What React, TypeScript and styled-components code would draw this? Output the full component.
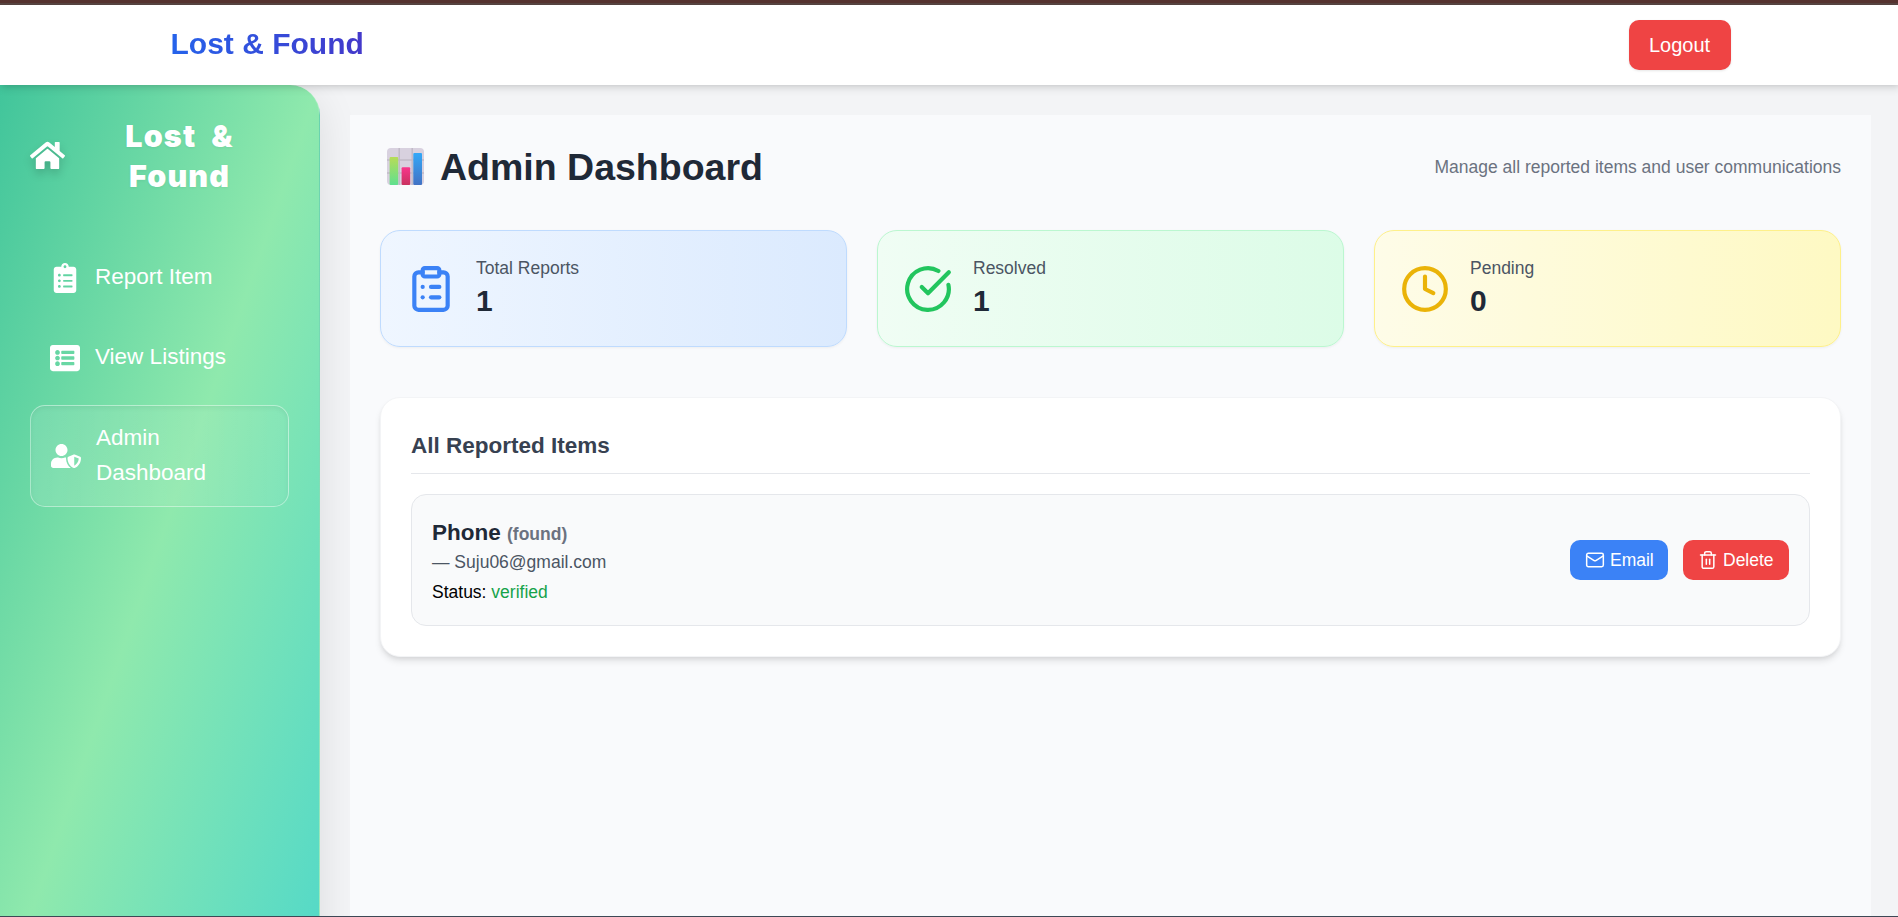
import React from "react";
import styled, { createGlobalStyle, css } from "styled-components";
import { FaHome, FaClipboardList, FaListAlt, FaUserShield } from "react-icons/fa";
import { ClipboardList, CircleCheckBig, Clock, Mail, Trash2 } from "lucide-react";

const GlobalStyle = createGlobalStyle`
  *, *::before, *::after { box-sizing: border-box; }
  body {
    margin: 0;
    background: #f3f4f6;
    font-family: "Liberation Sans", Arial, sans-serif;
    font-size: 20px;
    line-height: 30px;
  }
  h1, h2, h3, p { margin: 0; }
  button { font-family: inherit; border: 0; cursor: pointer; }
`;

const Viewport = styled.div`
  position: relative;
  height: 917px;
  overflow: hidden;
`;

const Page = styled.div`
  width: 1901px;
`;

const TopStrip = styled.div`
  height: 5px;
  background: linear-gradient(#55322f 0 3px, #564340 3px);
`;

const Header = styled.header`
  position: relative;
  z-index: 2;
  height: 80px;
  background: #fff;
  box-shadow: 0 5px 7.5px -1px rgba(0, 0, 0, 0.1), 0 2.5px 5px -2.5px rgba(0, 0, 0, 0.1);
`;

const HeaderInner = styled.div`
  display: flex;
  align-items: center;
  justify-content: space-between;
  width: 1600px;
  height: 100%;
  margin: 0 auto;
  padding: 0 20px;
`;

const Brand = styled.span`
  margin-bottom: 2px;
  font-size: 30px;
  font-weight: 700;
  line-height: 40px;
  background: linear-gradient(to right, #2563eb, #4338ca);
  background-clip: text;
  -webkit-background-clip: text;
  color: transparent;
`;

const LogoutButton = styled.button`
  width: 102px;
  height: 50px;
  border-radius: 10px;
  background: #ef4444;
  color: #fff;
  font-size: 20px;
  line-height: 30px;
  box-shadow: 0 1px 2.5px rgba(0, 0, 0, 0.1);
`;

const Body = styled.div`
  display: flex;
`;

const Sidebar = styled.aside`
  width: 320px;
  height: 917px;
  flex-shrink: 0;
  padding: 30px;
  border-right: 1px solid rgba(255, 255, 255, 0.2);
  border-top-right-radius: 30px;
  background: linear-gradient(to bottom right, #41c59b, #8fe9ad, #50d8c9);
  box-shadow: 0 10px 40px rgba(0, 0, 0, 0.1);
  color: #fff;
`;

const SidebarBrand = styled.div`
  display: flex;
  align-items: center;
  gap: 5px;
  height: 80px;
  margin-bottom: 50px;
  svg { filter: drop-shadow(0 5px 4px rgba(0, 0, 0, 0.16)); flex-shrink: 0; }
`;

const SidebarTitle = styled.h1`
  flex: 1;
  padding-top: 2px;
  text-align: center;
  font-family: Inter, "Liberation Sans", sans-serif;
  font-size: 30.5px;
  font-weight: 900;
  line-height: 40px;
  letter-spacing: 1.1px;
  word-spacing: 8px;
  text-shadow: 0 1px 3px rgba(0, 0, 0, 0.06);
`;

const Nav = styled.nav`
  display: flex;
  flex-direction: column;
  gap: 15px;
`;

const NavItem = styled.a<{ $active?: boolean }>`
  display: flex;
  align-items: center;
  gap: 15px;
  padding: 15px 20px;
  border-radius: 15px;
  font-size: 22.5px;
  line-height: 35px;
  svg { flex-shrink: 0; }
  ${({ $active }) =>
    $active &&
    css`
      border: 1px solid rgba(255, 255, 255, 0.4);
      background: linear-gradient(to right, rgba(255, 255, 255, 0.12), rgba(255, 255, 255, 0.05));
      box-shadow: inset 0 2px 5px rgba(0, 0, 0, 0.06);
    `}
`;

const NavLabel = styled.span`
  margin: -1px 0 1px;
`;

const Main = styled.main`
  flex: 1;
  padding: 30px;
`;

const Panel = styled.section`
  min-height: 900px;
  padding: 30px;
  background: #f9fafc;
`;

const TitleRow = styled.div`
  display: flex;
  align-items: center;
  justify-content: space-between;
  height: 45px;
  margin-bottom: 40px;
`;

const Title = styled.h1`
  display: flex;
  align-items: center;
  gap: 16px;
  padding-left: 7px;
  font-size: 37.5px;
  line-height: 45px;
  color: #1f2937;
  svg { margin-bottom: 2px; }
`;

const Subtitle = styled.p`
  font-size: 17.5px;
  line-height: 25px;
  color: #6b7280;
`;

const Stats = styled.div`
  display: grid;
  grid-template-columns: repeat(3, 1fr);
  gap: 30px;
  margin-bottom: 50px;
`;

const StatCard = styled.div<{ $from: string; $to: string; $line: string; $ink: string }>`
  display: flex;
  align-items: center;
  gap: 20px;
  height: 117px;
  padding: 25px;
  border: 1px solid ${(p) => p.$line};
  border-radius: 20px;
  background: linear-gradient(to right, ${(p) => p.$from}, ${(p) => p.$to});
  box-shadow: 0 1px 2.5px rgba(0, 0, 0, 0.05);
  > svg { color: ${(p) => p.$ink}; }
`;

const StatLabel = styled.p`
  font-size: 17.5px;
  line-height: 25px;
  color: #4b5563;
`;

const StatValue = styled.p`
  font-size: 30px;
  font-weight: 700;
  line-height: 40px;
  color: #1f2937;
`;

const ItemsCard = styled.section`
  padding: 30px;
  border: 1px solid #f3f4f6;
  border-radius: 20px;
  background: #fff;
  box-shadow: 0 5px 7.5px -1px rgba(0, 0, 0, 0.1), 0 2.5px 5px -2.5px rgba(0, 0, 0, 0.1);
`;

const ItemsHeading = styled.h2`
  height: 46px;
  margin-bottom: 20px;
  border-bottom: 1px solid #e5e7eb;
  font-size: 22.5px;
  line-height: 35px;
  color: #374151;
`;

const Item = styled.article`
  display: flex;
  align-items: center;
  justify-content: space-between;
  padding: 20px;
  border: 1px solid #e5e7eb;
  border-radius: 15px;
  background: #f9fafb;
`;

const ItemName = styled.h3`
  font-size: 22.5px;
  line-height: 35px;
  color: #1f2937;
  span { font-size: 17.5px; line-height: 1; color: #6b7280; }
`;

const ItemEmail = styled.p`
  font-size: 17.5px;
  line-height: 25px;
  color: #4b5563;
`;

const ItemStatus = styled.p`
  margin-top: 5px;
  font-size: 17.5px;
  line-height: 25px;
  color: #000;
  span { color: #16a34a; }
`;

const Actions = styled.div`
  display: flex;
  gap: 15px;
`;

const ActionButton = styled.button<{ $bg: string; $width: number }>`
  display: flex;
  align-items: center;
  gap: 5px;
  width: ${(p) => p.$width}px;
  height: 40px;
  padding: 0 15px;
  border-radius: 10px;
  background: ${(p) => p.$bg};
  color: #fff;
  font-size: 17.5px;
  line-height: 25px;
  svg { flex-shrink: 0; }
`;

const BottomEdge = styled.div`
  position: absolute;
  inset: auto 0 0 0;
  z-index: 3;
  height: 1px;
  background: #3d4855;
`;

const ChartIcon = () => (
  <svg width="37" height="37" viewBox="0 0 37 37">
    <defs>
      <linearGradient id="green" x1="0" y1="0" x2="0" y2="1">
        <stop offset="0" stopColor="#b7dc58" />
        <stop offset="1" stopColor="#5fe08f" />
      </linearGradient>
      <linearGradient id="pink" x1="0" y1="0" x2="0" y2="1">
        <stop offset="0" stopColor="#f8368c" />
        <stop offset="1" stopColor="#c9325f" />
      </linearGradient>
      <linearGradient id="blue" x1="0" y1="0" x2="0" y2="1">
        <stop offset="0" stopColor="#33a8f8" />
        <stop offset="1" stopColor="#4272c4" />
      </linearGradient>
    </defs>
    <rect width="37" height="37" rx="4" fill="#d8d1df" />
    <path d="M12.2 0v37M25.2 0v37M0 12h37M0 25h37" stroke="#c1bac7" strokeWidth="1.5" />
    <rect x="2.6" y="9" width="8.6" height="28" rx="1" fill="url(#green)" />
    <rect x="14.6" y="19.3" width="8.6" height="17.7" rx="1" fill="url(#pink)" />
    <rect x="26.3" y="5" width="8.7" height="32" rx="1" fill="url(#blue)" />
  </svg>
);

const stats = [
  { label: "Total Reports", value: 1, Icon: ClipboardList, from: "#eff6ff", to: "#dbeafe", line: "#bfdbfe", ink: "#3b82f6" },
  { label: "Resolved", value: 1, Icon: CircleCheckBig, from: "#f0fdf4", to: "#dcfce7", line: "#bbf7d0", ink: "#22c55e" },
  { label: "Pending", value: 0, Icon: Clock, from: "#fefce8", to: "#fef9c3", line: "#fef08a", ink: "#eab308" },
];

export default function App() {
  return (
    <Viewport>
      <GlobalStyle />
      <Page>
        <TopStrip />
        <Header>
          <HeaderInner>
            <Brand>Lost &amp; Found</Brand>
            <LogoutButton>Logout</LogoutButton>
          </HeaderInner>
        </Header>
        <Body>
          <Sidebar>
            <SidebarBrand>
              <FaHome size={35} />
              <SidebarTitle>Lost &amp;<br />Found</SidebarTitle>
            </SidebarBrand>
            <Nav>
              <NavItem><FaClipboardList size={30} /><NavLabel>Report Item</NavLabel></NavItem>
              <NavItem><FaListAlt size={30} /><NavLabel>View Listings</NavLabel></NavItem>
              <NavItem $active><FaUserShield size={30} /><NavLabel>Admin Dashboard</NavLabel></NavItem>
            </Nav>
          </Sidebar>
          <Main>
            <Panel>
              <TitleRow>
                <Title><ChartIcon />Admin Dashboard</Title>
                <Subtitle>Manage all reported items and user communications</Subtitle>
              </TitleRow>
              <Stats>
                {stats.map(({ label, value, Icon, from, to, line, ink }) => (
                  <StatCard key={label} $from={from} $to={to} $line={line} $ink={ink}>
                    <Icon size={50} />
                    <div>
                      <StatLabel>{label}</StatLabel>
                      <StatValue>{value}</StatValue>
                    </div>
                  </StatCard>
                ))}
              </Stats>
              <ItemsCard>
                <ItemsHeading>All Reported Items</ItemsHeading>
                <Item>
                  <div>
                    <ItemName>Phone <span>(found)</span></ItemName>
                    <ItemEmail>— Suju06@gmail.com</ItemEmail>
                    <ItemStatus>Status: <span>verified</span></ItemStatus>
                  </div>
                  <Actions>
                    <ActionButton $bg="#3b82f6" $width={98}><Mail size={20} strokeWidth={1.8} />Email</ActionButton>
                    <ActionButton $bg="#ef4444" $width={106}><Trash2 size={20} strokeWidth={1.8} />Delete</ActionButton>
                  </Actions>
                </Item>
              </ItemsCard>
            </Panel>
          </Main>
        </Body>
      </Page>
      <BottomEdge />
    </Viewport>
  );
}
